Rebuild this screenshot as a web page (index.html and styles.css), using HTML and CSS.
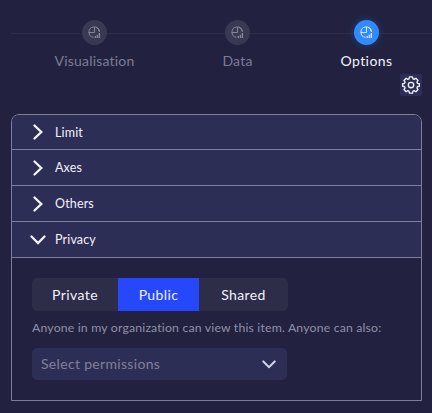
FILE: index.html
```html
<!DOCTYPE html>
<html lang="en">
<head>
<meta charset="utf-8">
<title>Chart options</title>
<link rel="stylesheet" href="styles.css">
</head>
<body>
<svg class="defs" width="0" height="0" aria-hidden="true">
  <symbol id="chart" viewBox="0 0 13 13">
    <g fill="none" stroke="currentColor" stroke-width=".9">
      <path d="M6.500 1v5.500H.7M11.300 5.200A5.200 5.200 0 1 0 5.500 11.300M8 1.300a5.200 5.200 0 0 1 3.500 4.700"/>
    </g>
    <path fill="currentColor" d="M6.700 9.900h1.200V12H6.700zM8.700 8.800h1.200V12H8.700zM10.700 7h1.300v5h-1.300z"/>
  </symbol>
  <symbol id="right" viewBox="0 0 10 16">
    <path d="M1.500 1.500L8.300 8l-6.800 6.500" fill="none" stroke="currentColor" stroke-width="2.300" stroke-linecap="round"/>
  </symbol>
  <symbol id="down" viewBox="0 0 16 10">
    <path d="M1.500 1.500L8 8l6.500-6.500" fill="none" stroke="currentColor" stroke-width="2.300" stroke-linecap="round"/>
  </symbol>
</svg>
<nav class="steps">
  <div class="step step-visualisation"><span class="dot"><svg><use href="#chart"/></svg></span><span class="label">Visualisation</span></div>
  <div class="step step-data"><span class="dot"><svg><use href="#chart"/></svg></span><span class="label">Data</span></div>
  <div class="step step-options active"><span class="dot"><svg><use href="#chart"/></svg></span><span class="label">Options</span></div>
</nav>
<div class="toolbar">
  <button class="settings" aria-label="Settings">
    <svg viewBox="0 0 20 20" fill="none" stroke="currentColor" stroke-width="1.500" stroke-linejoin="round">
      <path d="M8.300 1h3.400l.5 2.200 1.300.5 1.900-1.200 2.400 2.400-1.200 1.900.5 1.300 2.200.5v2.800l-2.200.5-.5 1.300 1.200 1.900-2.400 2.400-1.900-1.200-1.300.5-.5 2.200H8.300l-.5-2.200-1.300-.5-1.900 1.200-2.400-2.400 1.200-1.900-.5-1.300-2.200-.5V8.600l2.200-.5.500-1.300-1.200-1.900 2.400-2.400 1.900 1.200 1.300-.5z"/>
      <circle cx="10" cy="10" r="3"/>
    </svg>
  </button>
</div>
<main class="accordion">
  <div class="row"><span class="arrow"><svg class="right"><use href="#right"/></svg></span><span class="limit">Limit</span></div>
  <div class="row"><span class="arrow"><svg class="right"><use href="#right"/></svg></span><span class="axes">Axes</span></div>
  <div class="row"><span class="arrow"><svg class="right"><use href="#right"/></svg></span><span class="others">Others</span></div>
  <div class="row"><span class="arrow"><svg class="down"><use href="#down"/></svg></span><span class="privacy">Privacy</span></div>
  <section class="content">
    <div class="tabs">
      <button class="tab">Private</button>
      <button class="tab selected">Public</button>
      <button class="tab shared">Shared</button>
    </div>
    <p class="hint">Anyone in my organization can view this item. Anyone can also:</p>
    <div class="select"><span class="value">Select permissions</span><svg class="caret"><use href="#down"/></svg></div>
  </section>
</main>
</body>
</html>
```
FILE: styles.css
```css
* { box-sizing: border-box; }
body {
  margin: 0;
  height: 413px;
  overflow: hidden;
  background: #222240;
  color: #f2f2fb;
  font-family: Lato, "Liberation Sans", sans-serif;
}
button { border: 0; padding: 0; margin: 0; font: inherit; letter-spacing: inherit; color: inherit; }
svg { display: block; flex: none; }
.defs { position: absolute; }
.steps {
  display: flex;
  gap: 88px;
  height: 74px;
  padding: 20px 0 0 54.5px;
  background: linear-gradient(#2d2d4b, #2d2d4b) 11px 33px / 421px 1px no-repeat;
}
.step { display: flex; flex-direction: column; align-items: center; color: #7c7c95; }
.step-visualisation { width: 80px; }
.step-data { width: 30px; }
.step-options { width: 52px; }
.dot {
  display: flex;
  align-items: center;
  justify-content: center;
  width: 25px;
  height: 25px;
  border-radius: 50%;
  background: #393956;
  color: #8c8ca2;
}
.dot svg { width: 13px; height: 13px; }
.label { margin-top: 6px; font-size: 14px; letter-spacing: .2px; line-height: 19px; white-space: nowrap; }
.active { color: #f2f2fb; }
.active .label { letter-spacing: .4px; }
.active .dot { background: #328aff; color: #e3f0ff; box-shadow: 0 0 7px rgba(50, 138, 255, .3); }
.toolbar { display: flex; justify-content: flex-end; height: 40px; padding-right: 10px; }
.settings {
  display: flex;
  align-items: center;
  justify-content: center;
  width: 22px;
  height: 22px;
  border-radius: 2px;
  background: #2d2e55;
}
.settings svg { width: 18px; height: 18px; }
.accordion {
  width: 411px;
  height: 287px;
  margin-left: 11px;
  border: 1px solid #7d7d9c;
  border-radius: 8px 8px 0 0;
  overflow: hidden;
}
.row {
  display: flex;
  align-items: center;
  height: 36px;
  padding-left: 17px;
  border-bottom: 1px solid #7d7d9c;
  background: #2d2e55;
  font-size: 12.5px;
  letter-spacing: .15px;
}
.row:first-child { height: 35px; }
.arrow { display: flex; justify-content: center; width: 18px; margin-right: 8px; }
.right { width: 10px; height: 16px; }
.down { width: 16px; height: 10px; }
.content { padding: 20px; }
.tabs {
  display: flex;
  width: 256px;
  height: 33px;
  border-radius: 5px;
  overflow: hidden;
  font-size: 14px;
  letter-spacing: .4px;
}
.tab { width: 86px; background: #2d2d4a; }
.tab.selected { width: 81px; background: #2448fa; }
.tab.shared { width: 89px; }
.hint { margin: 8px 0 12px; font-size: 12.25px; letter-spacing: .18px; line-height: 17px; color: #9090a8; white-space: nowrap; }
.select {
  display: flex;
  align-items: center;
  justify-content: space-between;
  width: 255px;
  height: 32px;
  padding: 0 11px 0 9px;
  border-radius: 5px;
  background: #2d2e55;
  color: #80809b;
  font-size: 14px;
  letter-spacing: .32px;
}
.value { padding-bottom: 1px; }
.caret { width: 14px; height: 9px; color: #d4d4eb; }
```
